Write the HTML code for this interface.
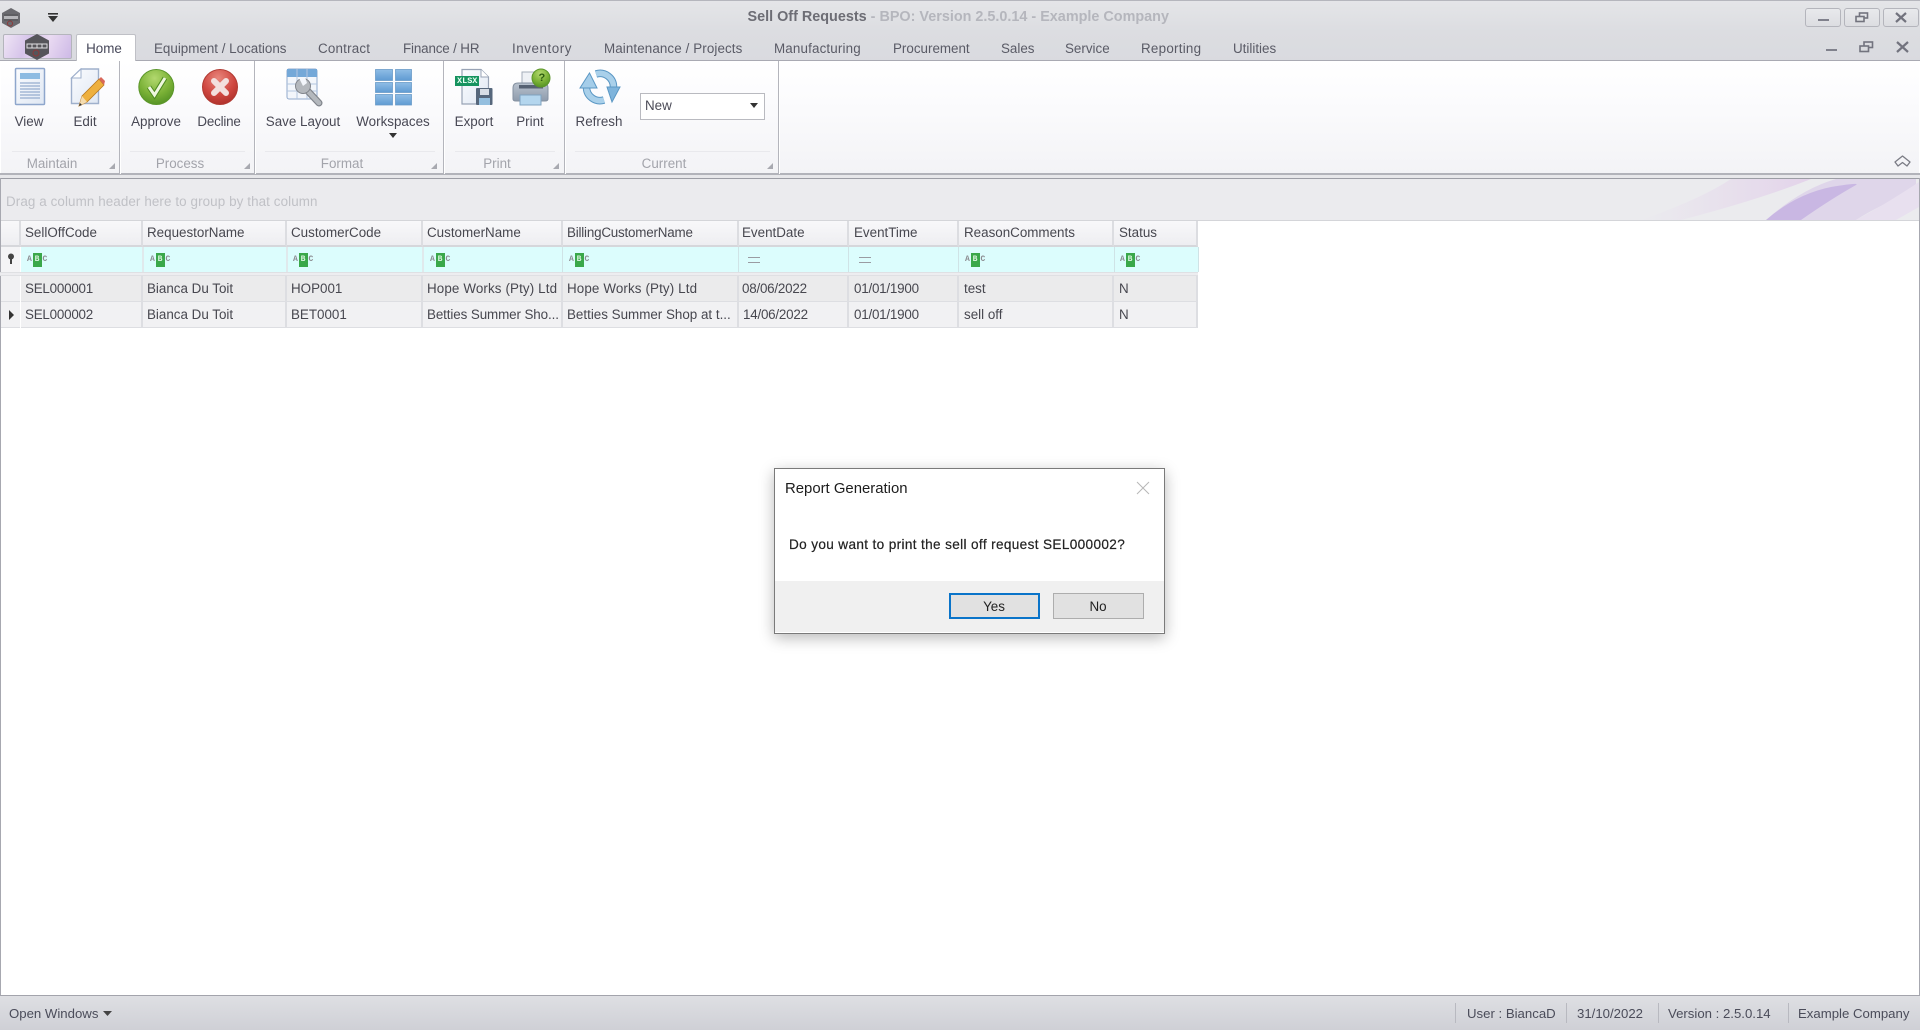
<!DOCTYPE html>
<html><head><meta charset="utf-8"><title>Sell Off Requests</title>
<style>
html,body{margin:0;padding:0;width:1920px;height:1030px;overflow:hidden;background:#fff}
body{position:relative;font-family:"Liberation Sans",sans-serif;font-size:13.4px;color:#4b4b57}
#app{position:absolute;left:0;top:0;width:1920px;height:1030px;filter:blur(.35px);overflow:hidden}
.b{position:absolute}
.t{position:absolute;line-height:20px;height:20px;white-space:nowrap;margin-top:1px}
.c{transform:translateX(-50%)}
.tab{color:#5a5b66;top:38px}
.lbl{top:111px;color:#484854}
.grp{top:153px;color:#a3a4ab}
.sep{position:absolute;top:61px;width:1px;height:113px;background:#b4b5bc;box-shadow:1px 0 0 #fff}
.gl{position:absolute;top:151px;height:1px;background:#e9e9ed}
.tri{position:absolute;top:163px;width:0;height:0;border-left:6px solid transparent;border-bottom:6px solid #a8a9b0}
.hd{position:absolute;top:221px;height:24px;background:linear-gradient(#f8f8fa,#eeeef1);border-right:2px solid #dcdde1;border-bottom:2px solid #d6d7db}
.fl{position:absolute;top:247px;height:25px;background:#dcfdfd;border-right:1px solid #cfe3e6}
.rw{position:absolute;height:25px;border-right:2px solid #dddee2;border-bottom:1px solid #dddee2}
.r1{top:276px;background:#ebebec}.r2{top:302px;background:#f1f1f3}
.gt{color:#47474f}
.abc{position:absolute;top:252.5px;width:20px;height:14px}
.abc i{position:absolute;top:0;font:bold 8px/14px "Liberation Mono",monospace}
.abc .a{left:0;color:#8b8b90}.abc .bb{left:5.5px;width:9px;height:14px;background:#3aa84a;color:#d9f4dd;text-align:center}.abc .cc{left:15.5px;color:#8b8b90}
.eq{position:absolute;top:257px;width:12px;height:4px;border-top:1px solid #9a9ba2;border-bottom:1px solid #9a9ba2}
.wb{position:absolute;top:8px;height:17px;border:1px solid #b4b5bc;border-radius:3px;background:linear-gradient(#e8e9ec,#dcdde1)}
.st{top:1003px;font-size:13.2px;color:#4b4c5a}
.ds{letter-spacing:-.22px}
</style></head><body>
<div id="app">
<!-- chrome -->
<div class="b" style="left:0;top:0;width:1920px;height:61px;background:linear-gradient(#e4e5e8 0,#dcdde1 30px,#d9dadf 61px);border-top:1px solid #b5b6bd;box-sizing:border-box"></div>
<div class="b" style="left:0;top:60px;width:1920px;height:1px;background:#a9aab3"></div>

<!-- top hex -->
<svg class="b" style="left:0;top:5px" width="24" height="26" viewBox="0 0 24 26"><path d="M11 3 20 8V18L11 23 2 18V8Z" fill="#6a6a6f"/><rect x="4" y="11" width="14" height="3" fill="#b5b5b9"/><path d="M4 10H18M4 15H18" stroke="#4a4a4e" stroke-width=".7"/><circle cx="10" cy="18.5" r="2.5" fill="none" stroke="#8c3a3a"/></svg>
<svg class="b" style="left:47px;top:12px" width="13" height="11"><rect x="1" y="1" width="10" height="1.6" fill="#333"/><path d="M1 4H11L6 10Z" fill="#333"/></svg>

<!-- title -->
<div class="t" style="left:747.5px;top:6px;font-weight:bold;font-size:14.4px;color:#6d6d75">Sell Off Requests<span style="color:#b5b6bd"> - BPO: Version 2.5.0.14 - Example Company</span></div>

<!-- window buttons -->
<div class="wb" style="left:1805px;width:34px"><div class="b" style="left:12px;top:10px;width:11px;height:2px;background:#80818c"></div></div>
<div class="wb" style="left:1844px;width:34px"><svg class="b" style="left:10px;top:3px" width="14" height="11"><rect x="4.5" y="1" width="8" height="5" fill="none" stroke="#72737e" stroke-width="1.6"/><rect x="1" y="4.5" width="8" height="5" fill="#e2e3e6" stroke="#72737e" stroke-width="1.6"/></svg></div>
<div class="wb" style="left:1883px;width:34px"><svg class="b" style="left:11px;top:3px" width="12" height="11"><path d="M1 1 11 10M11 1 1 10" stroke="#72737e" stroke-width="2.2"/></svg></div>
<div class="b" style="left:1826px;top:49px;width:11px;height:2px;background:#80818c"></div>
<svg class="b" style="left:1859px;top:41px" width="15" height="12"><rect x="5" y="1" width="8.5" height="5.5" fill="none" stroke="#72737e" stroke-width="1.6"/><rect x="1" y="5" width="8.5" height="5.5" fill="#dadbdf" stroke="#72737e" stroke-width="1.6"/></svg>
<svg class="b" style="left:1896px;top:41px" width="13" height="12"><path d="M1 1 12 11M12 1 1 11" stroke="#72737e" stroke-width="2.2"/></svg>

<!-- logo btn -->
<div class="b" style="left:3px;top:34px;width:67px;height:23px;border:1px solid #b4b5bc;border-radius:2px;background:linear-gradient(115deg,#efe5f5 0,#d6c4ea 35%,#eadbf2 60%,#cdb9e6 100%)"></div>
<svg class="b" style="left:24px;top:33px" width="26" height="28" viewBox="0 0 26 28"><path d="M13 1 25 7.5V20.5L13 27 1 20.5V7.5Z" fill="#55555a"/><rect x="3" y="11" width="20" height="4" fill="none" stroke="#e0e0e3"/><path d="M8 11V15M13 11V15M18 11V15" stroke="#e0e0e3"/><circle cx="12" cy="20" r="3" fill="none" stroke="#8c3a3a"/></svg>

<!-- tabs -->
<div class="b" style="left:76px;top:34px;width:58px;height:27px;background:#fff;border:1px solid #bfc0c6;border-bottom:0;border-radius:2px 2px 0 0;box-sizing:content-box"></div>
<div class="t tab c" style="left:104px;color:#47485a">Home</div>
<div class="t tab" style="left:154px">Equipment / Locations</div>
<div class="t tab" style="left:318px;letter-spacing:.2px">Contract</div>
<div class="t tab" style="left:403px;letter-spacing:-.15px">Finance / HR</div>
<div class="t tab" style="left:512px;letter-spacing:.55px">Inventory</div>
<div class="t tab" style="left:604px;letter-spacing:.1px">Maintenance / Projects</div>
<div class="t tab" style="left:774px;letter-spacing:.15px">Manufacturing</div>
<div class="t tab" style="left:893px">Procurement</div>
<div class="t tab" style="left:1001px">Sales</div>
<div class="t tab" style="left:1065px">Service</div>
<div class="t tab" style="left:1141px;letter-spacing:.25px">Reporting</div>
<div class="t tab" style="left:1233px">Utilities</div>

<!-- ribbon -->
<div class="b" style="left:1px;top:61px;width:1918px;height:113px;background:linear-gradient(#fff 0,#fbfbfd 40px,#f3f3f6 113px)"></div>
<div class="b" style="left:0;top:173px;width:1920px;height:2px;background:#b2b3ba"></div>
<div class="b" style="left:0;top:175px;width:1920px;height:3px;background:#e7e7ea"></div>
<div class="b" style="left:0;top:178px;width:1920px;height:1px;background:#9c9da5"></div>
<div class="sep" style="left:119px"></div><div class="sep" style="left:254px"></div><div class="sep" style="left:443px"></div><div class="sep" style="left:564px"></div><div class="sep" style="left:778px"></div>
<div class="gl" style="left:12px;width:98px"></div><div class="gl" style="left:130px;width:115px"></div><div class="gl" style="left:265px;width:170px"></div><div class="gl" style="left:455px;width:100px"></div><div class="gl" style="left:575px;width:195px"></div>
<div class="tri" style="left:109px"></div><div class="tri" style="left:244px"></div><div class="tri" style="left:431px"></div><div class="tri" style="left:553px"></div><div class="tri" style="left:767px"></div>

<svg class="b" style="left:0;top:61px" width="780" height="60" viewBox="0 61 780 60">
<defs>
<radialGradient id="gr" cx=".45" cy=".25" r=".85"><stop offset="0" stop-color="#b2d86e"/><stop offset=".55" stop-color="#7ab136"/><stop offset="1" stop-color="#4a8a20"/></radialGradient>
<radialGradient id="rd" cx=".45" cy=".25" r=".85"><stop offset="0" stop-color="#e8867c"/><stop offset=".55" stop-color="#cf4740"/><stop offset="1" stop-color="#a52a25"/></radialGradient>
<linearGradient id="tile" x1="0" y1="0" x2="0" y2="1"><stop offset="0" stop-color="#8fbde6"/><stop offset="1" stop-color="#5f9bd2"/></linearGradient>
<linearGradient id="doc" x1="0" y1="0" x2="1" y2="1"><stop offset="0" stop-color="#fbfcfe"/><stop offset="1" stop-color="#dfe7f3"/></linearGradient>
<linearGradient id="pr" x1="0" y1="0" x2="0" y2="1"><stop offset="0" stop-color="#b9c2ce"/><stop offset="1" stop-color="#8e9bac"/></linearGradient>
</defs>
<!-- View -->
<rect x="15.5" y="68.5" width="29" height="36" rx="1" fill="url(#doc)" stroke="#8ea6cc" stroke-width="1.5"/>
<rect x="20" y="73" width="20" height="6" fill="#8dbbe2"/>
<path d="M20 83H40M20 86H40M20 89H40M20 92H40M20 95H40M20 98H40" stroke="#7f9bc4"/>
<!-- Edit -->
<path d="M81 69H98.5V103.5H71.5V78Z" fill="url(#doc)" stroke="#9fb0cc" stroke-width="1.4"/><path d="M81 69V78H71.5Z" fill="#fff" stroke="#9fb0cc"/>
<path d="M79 106 82 96 99 79 104 85 87 102Z" fill="#eeb03e" stroke="#b9791f" stroke-width=".8"/>
<path d="M99 79 101 77 105 81 104 85Z" fill="#d9675a"/><path d="M79 106 82 96 87 102Z" fill="#f4dcb0"/><path d="M79 106 80 103 82 105Z" fill="#333"/>
<!-- Approve -->
<circle cx="156.3" cy="87" r="17.5" fill="url(#gr)" stroke="#5b962a"/>
<path d="M149 87 154.5 95 165 78" fill="none" stroke="#4d8a20" stroke-width="5"/>
<path d="M149 87 154.5 95 165 78" fill="none" stroke="#eef7dd" stroke-width="3"/>
<!-- Decline -->
<circle cx="220" cy="87" r="17.5" fill="url(#rd)" stroke="#b13a32"/>
<path d="M214 81 226 93M226 81 214 93" stroke="#f3e0de" stroke-width="6" stroke-linecap="round"/>
<!-- Save layout -->
<rect x="287" y="69" width="30" height="30" rx="2" fill="#f3f6fb" stroke="#91a9cc"/>
<rect x="287" y="69" width="30" height="8" fill="#74a8d8"/>
<path d="M297 69V99M307 69V99M287 84H317M287 91H317" stroke="#b3c5df"/>
<path d="M305 88 319 103" stroke="#80848b" stroke-width="7" stroke-linecap="round"/>
<path d="M305 88 319 103" stroke="#b4b8bd" stroke-width="4.6" stroke-linecap="round"/>
<circle cx="303" cy="86" r="7.5" fill="#b4b8bd" stroke="#80848b"/>
<path d="M303 86 299 78 305 77 307 83Z" fill="#f3f6fb"/>
<!-- Workspaces -->
<g fill="url(#tile)" stroke="#6b9cc9" stroke-width=".8"><rect x="375.5" y="69.5" width="17" height="11"/><rect x="395.5" y="69.5" width="16" height="11"/><rect x="375.5" y="82.5" width="17" height="10"/><rect x="395.5" y="82.5" width="16" height="10"/><rect x="375.5" y="94.5" width="17" height="10.5"/><rect x="395.5" y="94.5" width="16" height="10.5"/></g>
<!-- Export -->
<path d="M462 69.5H481L488.5 77V104H462Z" fill="url(#doc)" stroke="#98a3b5" stroke-width="1.2"/>
<path d="M481 69.5V77H488.5" fill="#fff" stroke="#98a3b5"/>
<rect x="476" y="88" width="16.5" height="17" rx="1" fill="#56677c"/><rect x="480" y="89" width="9" height="6" fill="#d7dde5"/><rect x="479" y="98" width="11" height="7" fill="#94bfdf"/>
<rect x="455" y="76" width="24" height="10" fill="#16935f"/>
<!-- Print -->
<rect x="522" y="72" width="19" height="12" fill="#eef1f5" stroke="#a4adb9"/>
<path d="M513 88Q513 83 518 83H543Q548 83 548 88V99Q548 101 545 101H516Q513 101 513 99Z" fill="url(#pr)" stroke="#8591a1"/>
<rect x="519" y="85" width="24" height="3.5" fill="#566172"/>
<rect x="520" y="95" width="21" height="10" fill="#b4d6ee" stroke="#7fa3c0"/>
<circle cx="541" cy="78" r="9" fill="url(#gr)" stroke="#5b962a"/>
<!-- Refresh -->
<g fill="none" stroke-linecap="butt">
<path d="M613.5 87A13.5 13.5 0 0 0 596 74" stroke="#5a97c4" stroke-width="7.5"/>
<path d="M586.5 87A13.5 13.5 0 0 0 604 100" stroke="#5a97c4" stroke-width="7.5"/>
<path d="M613.5 87A13.5 13.5 0 0 0 596 74" stroke="#a9d0ea" stroke-width="5.5"/>
<path d="M586.5 87A13.5 13.5 0 0 0 604 100" stroke="#a9d0ea" stroke-width="5.5"/>
</g>
<path d="M580 88 589.5 73 597 88Z" fill="#a4cde9" stroke="#5a97c4"/>
<path d="M607 87 620 87 612 102Z" fill="#7eb4dc" stroke="#5a97c4"/>
</svg>
<div class="t" style="left:538.5px;top:67px;font:bold 11px/20px 'Liberation Sans',sans-serif;color:#2d5d10">?</div>
<div class="t" style="left:457px;top:70px;font:bold 8.5px/20px 'Liberation Mono',monospace;color:#e7fff2">XLSX</div>

<div class="t lbl c" style="left:29px">View</div>
<div class="t lbl c" style="left:85px">Edit</div>
<div class="t lbl c" style="left:156px">Approve</div>
<div class="t lbl c" style="left:219px;letter-spacing:-.2px">Decline</div>
<div class="t lbl c" style="left:303px">Save Layout</div>
<div class="t lbl c" style="left:393px">Workspaces</div>
<div class="t lbl c" style="left:474px">Export</div>
<div class="t lbl c" style="left:530px">Print</div>
<div class="t lbl c" style="left:599px">Refresh</div>
<svg class="b" style="left:388px;top:132px" width="10" height="7"><path d="M1 1H9L5 6Z" fill="#333"/></svg>
<div class="t grp c" style="left:52px">Maintain</div>
<div class="t grp c" style="left:180px">Process</div>
<div class="t grp c" style="left:342px">Format</div>
<div class="t grp c" style="left:497px">Print</div>
<div class="t grp c" style="left:664px">Current</div>

<!-- combo -->
<div class="b" style="left:640px;top:93px;width:123px;height:25px;background:#fff;border:1px solid #b9bac0"></div>
<div class="t" style="left:645px;top:95px;color:#4b4b57">New</div>
<svg class="b" style="left:749px;top:103px" width="10" height="6"><path d="M1 0H9L5 5Z" fill="#333"/></svg>
<!-- collapse -->
<svg class="b" style="left:1894px;top:154px" width="17" height="14"><path d="M1 8 8.5 2 16 8 13 12 8.5 8.5 4 12Z" fill="none" stroke="#7b7c85" stroke-width="1.3" stroke-linejoin="round"/></svg>

<!-- group panel -->
<div class="b" style="left:1px;top:179px;width:1918px;height:41px;background:#ebebee;overflow:hidden">
<svg width="1918" height="41" style="position:absolute;left:0;top:0">
<defs><linearGradient id="w1" x1="0" y1="0" x2="1" y2="0"><stop offset="0" stop-color="#e5d8ec" stop-opacity="0"/><stop offset="1" stop-color="#e3d3ea"/></linearGradient></defs>
<path d="M1680 41Q1760 20 1810 0H1730Q1700 20 1640 41Z" fill="url(#w1)"/>
<path d="M1765 41Q1800 10 1835 0H1915V12Q1880 25 1855 41Z" fill="#dfd6ea"/>
<path d="M1765 41Q1795 15 1830 8Q1860 3 1855 6Q1830 20 1800 41Z" fill="#c9b7e3"/>
<path d="M1855 41Q1885 25 1918 3V28L1895 41Z" fill="#e8e0ef"/>
</svg></div>
<div class="b" style="left:0;top:220px;width:1920px;height:1px;background:#d4d5d9"></div>
<div class="t" style="left:6px;top:191px;color:#c0c1c6;letter-spacing:.1px">Drag a column header here to group by that column</div>

<!-- window borders -->
<div class="b" style="left:0;top:178px;width:1px;height:820px;background:#a7a8b0"></div>
<div class="b" style="left:1918.5px;top:178px;width:1px;height:820px;background:#a7a8b0"></div>

<!-- grid -->
<div class="hd" style="left:1px;width:18px"></div>
<div class="hd" style="left:21px;width:120px"></div>
<div class="hd" style="left:143px;width:142px"></div>
<div class="hd" style="left:287px;width:134px"></div>
<div class="hd" style="left:423px;width:138px"></div>
<div class="hd" style="left:563px;width:174px"></div>
<div class="hd" style="left:739px;width:108px"></div>
<div class="hd" style="left:849px;width:108px"></div>
<div class="hd" style="left:959px;width:153px"></div>
<div class="hd" style="left:1114px;width:82px"></div>
<div class="t gt" style="left:25px;top:222px">SellOffCode</div>
<div class="t gt" style="left:147px;top:222px">RequestorName</div>
<div class="t gt" style="left:291px;top:222px">CustomerCode</div>
<div class="t gt" style="left:427px;top:222px">CustomerName</div>
<div class="t gt" style="left:567px;top:222px;letter-spacing:-.2px">BillingCustomerName</div>
<div class="t gt" style="left:742px;top:222px">EventDate</div>
<div class="t gt" style="left:854px;top:222px">EventTime</div>
<div class="t gt" style="left:964px;top:222px">ReasonComments</div>
<div class="t gt" style="left:1119px;top:222px">Status</div>

<div class="fl" style="left:21px;width:1177px;background:#dcfdfd"></div>
<div class="b" style="left:142px;top:247px;width:2px;height:25px;background:#e0e9ec"></div>
<div class="b" style="left:286px;top:247px;width:2px;height:25px;background:#e0e9ec"></div>
<div class="b" style="left:422px;top:247px;width:2px;height:25px;background:#e0e9ec"></div>
<div class="b" style="left:562px;top:247px;width:1px;height:25px;background:#cfe3e6"></div>
<div class="b" style="left:738px;top:247px;width:1px;height:25px;background:#cfe3e6"></div>
<div class="b" style="left:848px;top:247px;width:1px;height:25px;background:#cfe3e6"></div>
<div class="b" style="left:958px;top:247px;width:1px;height:25px;background:#cfe3e6"></div>
<div class="b" style="left:1114px;top:247px;width:1px;height:25px;background:#cfe3e6"></div>
<div class="b" style="left:1px;top:247px;width:19px;height:25px;background:#f4f4f6"></div>
<svg class="b" style="left:6px;top:253px" width="10" height="12"><circle cx="5" cy="3.5" r="3" fill="#444"/><rect x="4" y="5" width="2" height="6" fill="#444"/></svg>

<div class="abc" style="left:27px"><i class="a">A</i><i class="bb">B</i><i class="cc">C</i></div>
<div class="abc" style="left:150px"><i class="a">A</i><i class="bb">B</i><i class="cc">C</i></div>
<div class="abc" style="left:293px"><i class="a">A</i><i class="bb">B</i><i class="cc">C</i></div>
<div class="abc" style="left:430px"><i class="a">A</i><i class="bb">B</i><i class="cc">C</i></div>
<div class="abc" style="left:569px"><i class="a">A</i><i class="bb">B</i><i class="cc">C</i></div>
<div class="eq" style="left:748px"></div>
<div class="eq" style="left:859px"></div>
<div class="abc" style="left:965px"><i class="a">A</i><i class="bb">B</i><i class="cc">C</i></div>
<div class="abc" style="left:1120px"><i class="a">A</i><i class="bb">B</i><i class="cc">C</i></div>

<div class="b" style="left:0;top:272px;width:1198px;height:4px;background:linear-gradient(#d8d9dd,#f4f4f6 50%,#d8d9dd)"></div>

<!-- rows -->
<div class="b" style="left:1px;top:276px;width:19px;height:52px;background:#f1f1f3;border-bottom:1px solid #dddee2;box-sizing:border-box"></div>
<div class="b" style="left:1px;top:301px;width:19px;height:1px;background:#dddee2"></div>
<div class="rw r1" style="left:21px;width:120px"></div><div class="rw r1" style="left:143px;width:142px"></div><div class="rw r1" style="left:287px;width:134px"></div><div class="rw r1" style="left:423px;width:138px"></div><div class="rw r1" style="left:563px;width:174px"></div><div class="rw r1" style="left:739px;width:108px"></div><div class="rw r1" style="left:849px;width:108px"></div><div class="rw r1" style="left:959px;width:153px"></div><div class="rw r1" style="left:1114px;width:82px"></div>
<div class="rw r2" style="left:21px;width:120px"></div><div class="rw r2" style="left:143px;width:142px"></div><div class="rw r2" style="left:287px;width:134px"></div><div class="rw r2" style="left:423px;width:138px"></div><div class="rw r2" style="left:563px;width:174px"></div><div class="rw r2" style="left:739px;width:108px"></div><div class="rw r2" style="left:849px;width:108px"></div><div class="rw r2" style="left:959px;width:153px"></div><div class="rw r2" style="left:1114px;width:82px"></div>
<svg class="b" style="left:8px;top:310px" width="7" height="10"><path d="M1 0 6 5 1 10Z" fill="#333"/></svg>

<div class="t gt ds" style="left:25px;top:278px">SEL000001</div>
<div class="t gt" style="left:147px;top:278px">Bianca Du Toit</div>
<div class="t gt" style="left:291px;top:278px">HOP001</div>
<div class="t gt" style="left:427px;top:278px;letter-spacing:.12px">Hope Works (Pty) Ltd</div>
<div class="t gt" style="left:567px;top:278px;letter-spacing:.12px">Hope Works (Pty) Ltd</div>
<div class="t gt ds" style="left:742px;top:278px">08/06/2022</div>
<div class="t gt ds" style="left:854px;top:278px">01/01/1900</div>
<div class="t gt" style="left:964px;top:278px">test</div>
<div class="t gt" style="left:1119px;top:278px">N</div>
<div class="t gt ds" style="left:25px;top:304px">SEL000002</div>
<div class="t gt" style="left:147px;top:304px">Bianca Du Toit</div>
<div class="t gt" style="left:291px;top:304px">BET0001</div>
<div class="t gt" style="left:427px;top:304px;letter-spacing:-.1px">Betties Summer Sho...</div>
<div class="t gt" style="left:567px;top:304px">Betties Summer Shop at t...</div>
<div class="t gt ds" style="left:743px;top:304px">14/06/2022</div>
<div class="t gt ds" style="left:854px;top:304px">01/01/1900</div>
<div class="t gt" style="left:964px;top:304px">sell off</div>
<div class="t gt" style="left:1119px;top:304px">N</div>

<!-- dialog -->
<div class="b" style="left:774px;top:468px;width:389px;height:164px;background:#fff;border:1px solid #7a7a7a;box-shadow:0 4px 14px rgba(0,0,0,.28)"></div>
<div class="b" style="left:775px;top:581px;width:389px;height:51px;background:#f0f0f0"></div>
<div class="t" style="left:785px;top:478px;font-size:14.9px;color:#1c1c1c">Report Generation</div>
<svg class="b" style="left:1136px;top:481px" width="14" height="14"><path d="M1 1 13 13M13 1 1 13" stroke="#b8b8b8" stroke-width="1"/></svg>
<div class="t" style="left:789px;top:534px;font-size:13.6px;color:#222;letter-spacing:.35px;-webkit-text-stroke:.2px #222">Do you want to print the sell off request SEL000002?</div>
<div class="b" style="left:949px;top:593px;width:87px;height:22px;background:#e1e1e1;border:2px solid #0a74c9"></div>
<div class="t c" style="left:994px;top:596px;color:#222">Yes</div>
<div class="b" style="left:1053px;top:593px;width:89px;height:24px;background:#e1e1e1;border:1px solid #adadad"></div>
<div class="t c" style="left:1098px;top:596px;color:#222">No</div>

<!-- status -->
<div class="b" style="left:0;top:995px;width:1920px;height:35px;background:linear-gradient(#dedfe3,#cfd0d6);border-top:1px solid #a3a4ac;box-sizing:border-box"></div>
<div class="t st" style="left:9px">Open Windows</div>
<svg class="b" style="left:103px;top:1011px" width="9" height="6"><path d="M0 0H9L4.5 5Z" fill="#444"/></svg>
<div class="b" style="left:1455px;top:1003px;width:1px;height:20px;background:#b8b9c0"></div>
<div class="b" style="left:1566px;top:1003px;width:1px;height:20px;background:#b8b9c0"></div>
<div class="b" style="left:1658px;top:1003px;width:1px;height:20px;background:#b8b9c0"></div>
<div class="b" style="left:1788px;top:1003px;width:1px;height:20px;background:#b8b9c0"></div>
<div class="t st" style="left:1467px">User : BiancaD</div>
<div class="t st" style="left:1577px">31/10/2022</div>
<div class="t st" style="left:1668px">Version : 2.5.0.14</div>
<div class="t st" style="left:1798px">Example Company</div>
</div>
</body></html>
